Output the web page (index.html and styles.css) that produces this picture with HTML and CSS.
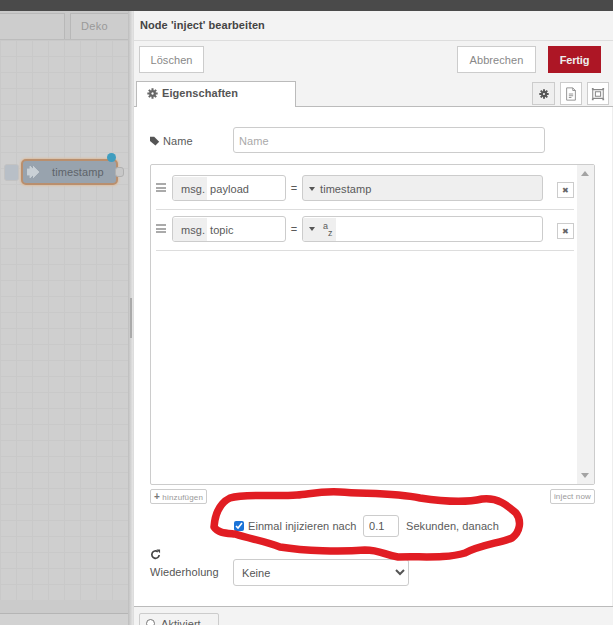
FILE: index.html
```html
<!DOCTYPE html>
<html lang="de">
<head>
<meta charset="utf-8">
<title>Node 'inject' bearbeiten</title>
<link rel="stylesheet" href="styles.css">
</head>
<body>
<div class="topbar"></div>
<div class="main">
  <section class="workspace">
    <div class="ws-tabs">
      <div class="ws-tab ws-tab-first"></div>
      <div class="ws-tab ws-tab-deko">Deko</div>
    </div>
    <div class="canvas">
      <div class="node">
        <span class="node-button"></span>
        <span class="node-body">
          <svg class="node-icon" viewBox="0 0 12 16"><path d="M0 5h3V2l6 6-6 6v-3H0z M6 2l6 6-6 6" fill="#c9d0d6" stroke="#c9d0d6" stroke-width=".8"/></svg>
          <span class="node-label">timestamp</span>
        </span>
        <span class="node-port"></span>
        <span class="node-dot"></span>
      </div>
    </div>
    <div class="ws-foot"></div>
    <div class="ws-status"></div>
  </section>
  <div class="divider"><span class="grip"></span></div>
  <section class="panel">
    <header class="panel-title">Node 'inject' bearbeiten</header>
    <div class="panel-actions">
      <button class="btn">Löschen</button>
      <span class="spacer"></span>
      <button class="btn btn-cancel">Abbrechen</button>
      <button class="btn btn-done">Fertig</button>
    </div>
    <div class="tabs">
      <div class="tab">
        <svg class="ico" viewBox="0 0 16 16"><path d="M8 4.600A3.400 3.400 0 1 0 8 11.400 3.400 3.400 0 0 0 8 4.600z" fill="none" stroke="#666" stroke-width="3.400"/><path d="M8 .5v3M8 12.500v3M.5 8h3M12.500 8h3M2.700 2.700l2 2M11.300 11.300l2 2M2.700 13.300l2-2M11.300 4.700l2-2" stroke="#666" stroke-width="3"/></svg>
        Eigenschaften
      </div>
      <div class="tab-icons">
        <span class="tab-ico tab-ico-on"><svg class="gear-small" viewBox="0 0 16 16"><path d="M8 4.600A3.400 3.400 0 1 0 8 11.400 3.400 3.400 0 0 0 8 4.600z" fill="none" stroke="#555" stroke-width="3.400"/><path d="M8 .5v3M8 12.500v3M.5 8h3M12.500 8h3M2.700 2.700l2 2M11.300 11.300l2 2M2.700 13.300l2-2M11.300 4.700l2-2" stroke="#555" stroke-width="3"/></svg></span>
        <span class="tab-ico"><svg viewBox="0 0 16 16"><path d="M3 1h7l3 3v11H3zM10 1v3h3M5.500 8h5M5.500 10h5M5.500 12h3" fill="none" stroke="#888" stroke-width="1"/></svg></span>
        <span class="tab-ico"><svg viewBox="0 0 16 16"><path d="M2 3h12v10H2z M5 5.500h6v5H5z" fill="none" stroke="#888" stroke-width="1.200"/><path d="M1 1h2v2H1zM13 1h2v2h-2zM1 13h2v2H1zM13 13h2v2h-2z" fill="#888"/></svg></span>
      </div>
    </div>
    <div class="form">
      <div class="name-row">
        <label class="name-label">
          <svg class="ico-tag" viewBox="0 0 12 12"><path d="M0 1h5l6 6-4.500 4.500L0 6z" fill="#555"/></svg>Name
        </label>
        <input class="text-input" placeholder="Name">
      </div>
      <div class="list-box">
        <div class="list-rows">
          <div class="list-row">
            <span class="handle"></span>
            <span class="typed"><span class="prefix">msg.</span><span class="typed-val">payload</span></span>
            <span class="eq">=</span>
            <span class="typed typed-wide typed-filled"><span class="caret"></span>timestamp</span>
            <span class="del">✖</span>
          </div>
          <div class="list-row">
            <span class="handle"></span>
            <span class="typed"><span class="prefix">msg.</span><span class="typed-val">topic</span></span>
            <span class="eq">=</span>
            <span class="typed typed-wide"><span class="az"><span class="caret"></span><span class="az-a">a</span><span class="az-z">z</span></span></span>
            <span class="del">✖</span>
          </div>
        </div>
        <div class="scroll"><span class="arrow-up"></span><span class="arrow-down"></span></div>
      </div>
      <div class="list-actions">
        <span class="mini"><b class="plus">+</b> hinzufügen</span>
        <span class="mini">inject now</span>
      </div>
      <div class="once-row">
        <input class="check" type="checkbox" checked>
        <span class="once-text">Einmal injizieren nach</span>
        <input class="delay" value="0.1">
        <span class="once-after">Sekunden, danach</span>
      </div>
      <div class="repeat-row">
        <div class="repeat-label">
          <svg class="ico-repeat" viewBox="0 0 12 12"><path d="M10 6.500A4 4 0 1 1 8.500 3" fill="none" stroke="#444" stroke-width="1.800"/><path d="M7 0.500l4 0v4z" fill="#444"/></svg>
          <span>Wiederholung</span>
        </div>
        <select class="select"><option>Keine</option></select>
      </div>
    </div>
    <footer class="panel-foot">
      <span class="status-btn"><span class="radio"></span>Aktiviert</span>
    </footer>
  </section>
</div>
<svg class="scribble" viewBox="0 0 613 625" aria-hidden="true"><path d="M214 527C215 514 220 503 230 498C245 493 270 497 297 495C310 494 320 491 340 492C365 494 395 493 420 498C440 501 465 503 482 499C498 497 508 506 516 513C522 521 520 532 512 538C500 543 480 545 465 553C445 559 420 556 398 557C385 555 380 550 365 550C340 552 305 551 280 547C265 541 250 539 235 534C225 533 218 533 214 527Z" fill="none" stroke="#e11d23" stroke-width="7.500" stroke-linejoin="round"/></svg>
</body>
</html>
```
FILE: styles.css
```css
* { box-sizing: border-box; }
html, body { margin: 0; height: 100%; overflow: hidden; }
body {
  width: 613px; height: 625px; position: relative;
  display: flex; flex-direction: column;
  font-family: "Liberation Sans", Arial, sans-serif;
  font-size: 11px; color: #5a5a5a; letter-spacing: .07px;
  background: #fff;
}
.topbar { height: 11px; flex: none; background: #4a4a4a; }
.main { flex: 1; display: flex; min-height: 0; }

.workspace { width: 128px; flex: none; display: flex; flex-direction: column; background: #cfcfcf; }
.ws-tabs { height: 29px; flex: none; display: flex; padding-top: 2px; background: #c9c9c9; border-bottom: 1px solid #bcbcbc; }
.ws-tab { height: 26px; border: 1px solid #b8b8b8; border-bottom: 0; background: #cdcdcd; }
.ws-tab-first { width: 65px; border-left: 0; }
.ws-tab-deko { width: 58px; margin-left: 5px; padding-left: 10px; color: #999; line-height: 25px; border-right: 0; letter-spacing: .3px; }
.canvas {
  flex: 1; position: relative;
  background-color: #cfcfcf;
  background-image:
    linear-gradient(#c9c9c9 1px, transparent 1px),
    linear-gradient(90deg, #c9c9c9 1px, transparent 1px);
  background-size: 16px 16px;
}
.ws-foot { height: 14px; flex: none; background: #cbcbcb; border-bottom: 1px solid #b5b5b5; }
.ws-status { height: 11px; flex: none; background: #d2d2d2; }

.node { position: absolute; left: 4px; top: 119px; display: flex; align-items: center; width: 120px; height: 26px; }
.node-button { width: 15px; height: 17px; background: #b8bfc7; border: 1px solid #c3c3c3; border-radius: 3px; margin-right: 2px; }
.node-body {
  width: 97px; height: 26px; display: flex; align-items: center;
  background: #98a3ae; border: 2px solid #b98f6e; border-radius: 5px;
  box-shadow: 0 0 2px 1px #dcbfa3;
}
.node-icon { width: 12px; height: 16px; margin: 0 0 0 4px; }
.node-label { margin-left: 13px; color: #5e646a; font-size: 11px; letter-spacing: .1px; }
.node-port { width: 9px; height: 10px; margin-left: -3px; background: #c8c8c8; border: 1px solid #b0b0b0; border-radius: 3px; }
.node-dot { position: absolute; left: 103px; top: -6px; width: 9px; height: 9px; border-radius: 50%; background: #3f9dbf; }

.divider { width: 5px; flex: none; display: flex; align-items: center; justify-content: center; background: linear-gradient(90deg, #bdbdbd, #e6e6e6); }
.grip { width: 2px; height: 40px; background: #aaa; }

.panel { flex: 1; min-width: 0; display: flex; flex-direction: column; background: #fff; border-left: 1px solid #ddd; }
.panel-title { height: 30px; flex: none; padding: 8px 0 0 6px; font-weight: bold; color: #444; background: #f3f3f3; border-bottom: 1px solid #ddd; font-size: 11px; }
.panel-actions { height: 39px; flex: none; display: flex; align-items: flex-start; padding: 5px 12px 0 5px; background: #f3f3f3; }
.spacer { flex: 1; }
.btn { height: 27px; width: 65px; padding: 0; font: inherit; letter-spacing: inherit; color: #888; background: #fff; border: 1px solid #ccc; }
.btn-cancel { width: 79px; margin-right: 12px; }
.btn-done { width: 53px; color: #eee; background: #ad1625; border-color: #ad1625; font-weight: bold; letter-spacing: -.2px; }

.tabs { height: 27px; flex: none; display: flex; justify-content: space-between; padding: 1px 0 0 2px; background: #f3f3f3; border-bottom: 1px solid #bbb; }
.tab { width: 160px; height: 26px; display: flex; align-items: center; gap: 4px; padding: 0 0 3px 10px; font-weight: bold; color: #555; background: #fff; border: 1px solid #bbb; border-bottom: 0; }
.ico { width: 11px; height: 11px; }
.tab-icons { display: flex; gap: 5px; padding: 1px 4px 0 0; }
.tab-ico { width: 22px; height: 23px; display: flex; align-items: center; justify-content: center; background: #fff; border: 1px solid #ccc; }
.tab-ico svg { width: 14px; height: 14px; }
.tab-ico .gear-small { width: 10px; height: 10px; }
.tab-ico-on { width: 23px; background: #efefef; }

.form { flex: 1; min-height: 0; padding: 20px 17px 0 16px; border-right: 1px solid #eee; display: flex; flex-direction: column; }
.name-row { display: flex; align-items: center; height: 26px; }
.name-label { width: 83px; display: flex; align-items: center; gap: 3px; padding-top: 1px; }
.ico-tag { width: 10px; height: 10px; }
.text-input { width: 312px; height: 26px; padding: 1px 5px 0; font: inherit; letter-spacing: inherit; border: 1px solid #ccc; border-radius: 3px; background: #fff; }
.text-input::placeholder { color: #aaa; }

.list-box { height: 321px; margin-top: 11px; display: flex; border: 1px solid #ccc; border-radius: 2px; }
.list-rows { flex: 1; min-width: 0; padding-top: 10px; }
.list-row { margin: 0 3px 6px 5px; padding-bottom: 8px; display: flex; align-items: flex-start; border-bottom: 1px solid #ddd; }
.handle { width: 10px; height: 9px; margin: 8px 6px 0 0; border-top: 2px solid #aaa; border-bottom: 2px solid #aaa; position: relative; }
.handle::after { content: ""; position: absolute; left: 0; right: 0; top: 1.500px; height: 2px; background: #aaa; }
.typed { width: 114px; height: 26px; display: flex; align-items: center; padding-top: 1px; border: 1px solid #ccc; border-radius: 3px; background: #fff; overflow: hidden; flex: none; }
.prefix { width: 34px; height: 100%; margin-top: -1px; padding-top: 1px; flex: none; display: flex; align-items: center; padding-left: 8px; background: #efefef; }
.typed-val { padding-left: 3px; }
.eq { width: 16px; text-align: center; line-height: 26px; }
.typed-wide { width: 241px; }
.typed-filled { background: #efefef; padding-left: 6px; }
.caret { width: 0; height: 0; margin-right: 5px; border: 3px solid transparent; border-top: 4px solid #555; border-bottom: 0; display: inline-block; }
.az { width: 33px; height: 100%; margin-top: -1px; padding-left: 6px; display: flex; align-items: center; background: #efefef; }
.az-a { font-size: 9px; margin: -6px 0 0 3px; }
.az-z { font-size: 9px; margin-top: 8px; }
.del { width: 17px; height: 16px; margin: 7px 0 0 14px; display: flex; align-items: center; justify-content: center; font-size: 8px; color: #666; border: 1px solid #ccc; background: #fff; }
.scroll { width: 17px; flex: none; position: relative; background: #f1f1f1; }
.arrow-up, .arrow-down { position: absolute; left: 4px; width: 0; height: 0; border: 4px solid transparent; }
.arrow-up { top: 6px; border-top: 0; border-bottom: 5px solid #a3a3a3; }
.arrow-down { bottom: 6px; border-bottom: 0; border-top: 5px solid #a3a3a3; }

.list-actions { display: flex; justify-content: space-between; margin-top: 4px; }
.mini { height: 15px; padding: 0 3px; line-height: 13px; font-size: 8px; color: #999; letter-spacing: .15px; border: 1px solid #ccc; border-radius: 2px; background: #fff; }
.plus { color: #777; font-size: 10px; }

.once-row { display: flex; align-items: center; height: 22px; margin-top: 11px; padding-left: 84px; }
.check { width: 10px; height: 10px; margin: 0 4px 0 0; accent-color: #1a73d8; }
.once-text { width: 115px; white-space: nowrap; }
.delay { width: 36px; height: 22px; padding: 0 5px; font: inherit; letter-spacing: inherit; color: #555; border: 1px solid #ccc; border-radius: 3px; }
.once-after { margin-left: 7px; white-space: nowrap; }

.repeat-row { display: flex; align-items: flex-end; margin-top: 12px; }
.repeat-label { width: 83px; display: flex; flex-direction: column; gap: 6px; padding-bottom: 8px; color: #555; white-space: nowrap; }
.ico-repeat { width: 11px; height: 11px; }
.select { width: 176px; height: 27px; padding: 0 4px; font: inherit; letter-spacing: inherit; color: #555; background: #fff; border: 1px solid #ccc; border-radius: 3px; }

.panel-foot { height: 19px; flex: none; padding: 6px 0 0 5px; background: #f3f3f3; border-top: 1px solid #bbb; overflow: hidden; }
.status-btn { width: 80px; height: 26px; display: flex; align-items: flex-start; gap: 6px; padding: 4px 0 0 6px; background: #f3f3f3; border: 1px solid #ccc; border-radius: 2px; }
.radio { width: 9px; height: 9px; margin-top: 1px; border: 1px solid #777; border-radius: 50%; background: #fff; }

.scribble { position: absolute; left: 0; top: 0; width: 613px; height: 625px; pointer-events: none; }
```
